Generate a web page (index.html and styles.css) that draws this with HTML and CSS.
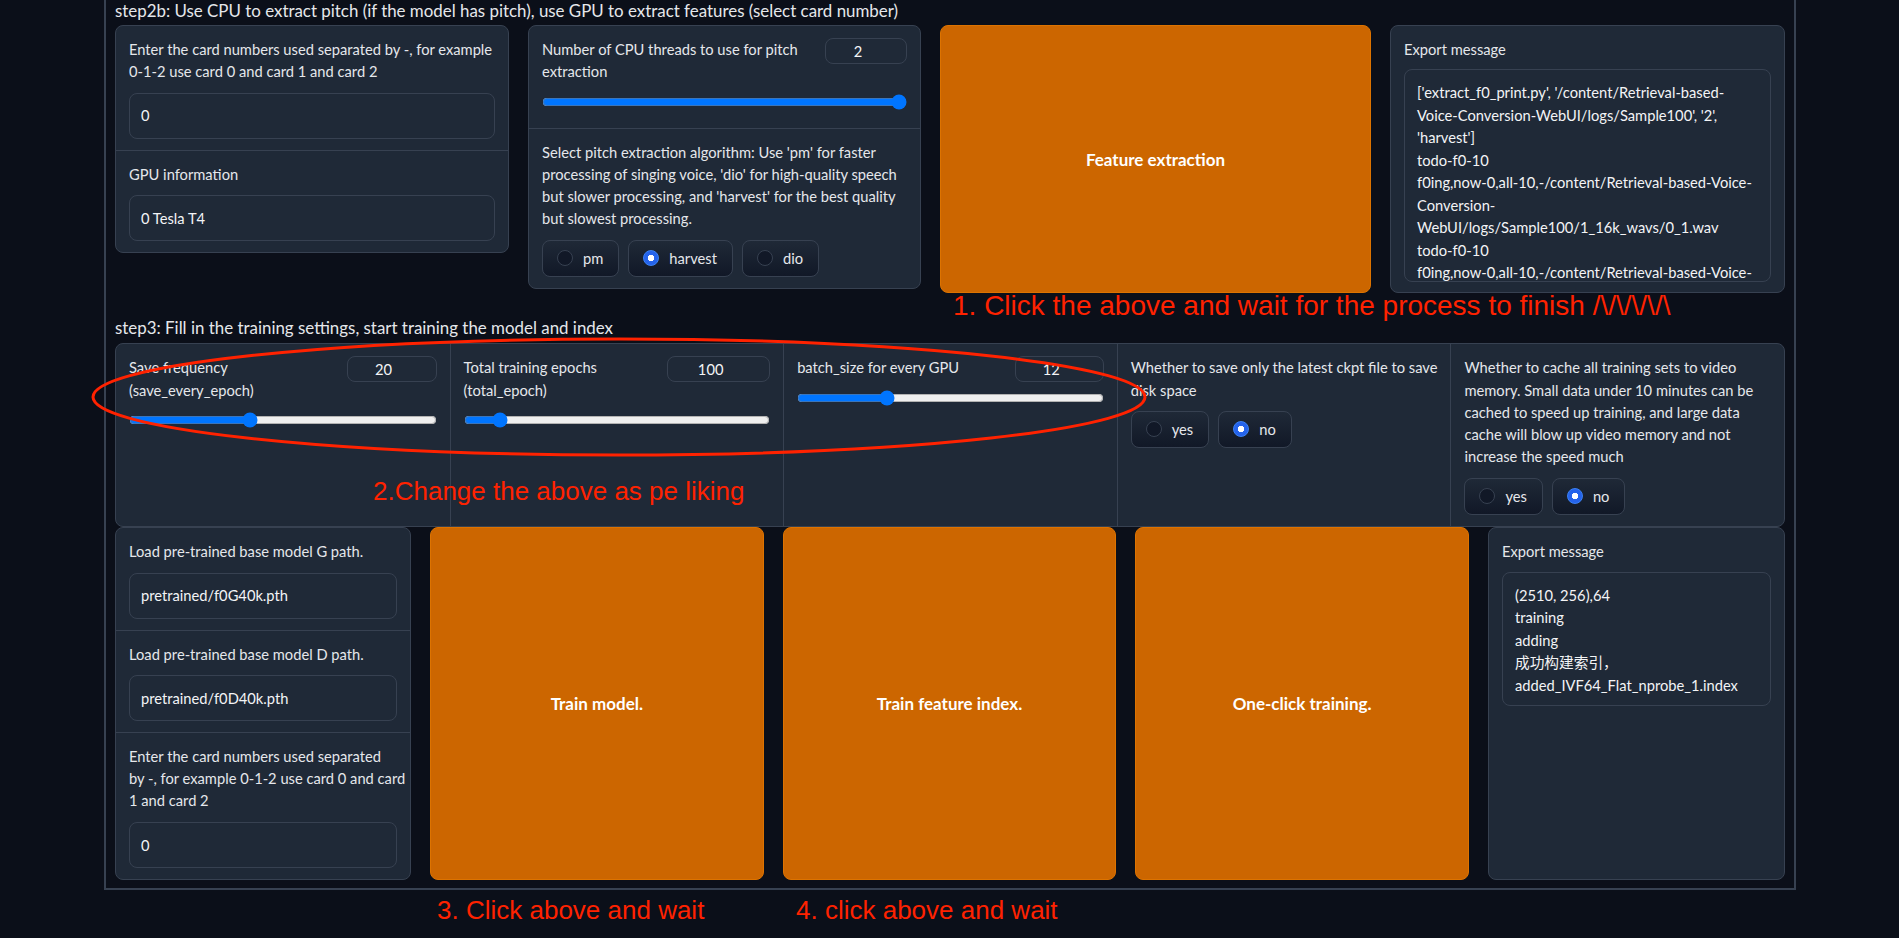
FILE: index.html
```html
<!DOCTYPE html>
<html lang="en">
<head>
<meta charset="utf-8">
<title>RVC training</title>
<link rel="stylesheet" href="styles.css">
</head>
<body>
<div class="page">
  <div class="frame">
    <div class="heading">step2b: Use CPU to extract pitch (if the model has pitch), use GPU to extract features (select card number)</div>

    <div class="row-top">
      <div class="card form">
        <div class="field">
          <div class="label">Enter the card numbers used separated by -, for example<br>0-1-2 use card 0 and card 1 and card 2</div>
          <div class="input">0</div>
        </div>
        <div class="field">
          <div class="label">GPU information</div>
          <div class="input">0 Tesla T4</div>
        </div>
      </div>

      <div class="card form">
        <div class="field field-slider">
          <div class="slider-head">
            <div class="label">Number of CPU threads to use for pitch<br>extraction</div>
            <div class="num num-82">2</div>
          </div>
          <input class="range" type="range" min="0" max="2" value="2">
        </div>
        <div class="field">
          <div class="label">Select pitch extraction algorithm: Use 'pm' for faster<br>processing of singing voice, 'dio' for high-quality speech<br>but slower processing, and 'harvest' for the best quality<br>but slowest processing.</div>
          <div class="radios">
            <div class="pill"><span class="dot"></span>pm</div>
            <div class="pill"><span class="dot on"></span>harvest</div>
            <div class="pill"><span class="dot"></span>dio</div>
          </div>
        </div>
      </div>

      <button class="btn">Feature extraction</button>

      <div class="card export">
        <div class="label">Export message</div>
        <div class="textarea ta-top">
          <div>['extract_f0_print.py', '/content/Retrieval-based-</div>
          <div>Voice-Conversion-WebUI/logs/Sample100', '2',</div>
          <div>'harvest']</div>
          <div>todo-f0-10</div>
          <div>f0ing,now-0,all-10,-/content/Retrieval-based-Voice-</div>
          <div>Conversion-</div>
          <div>WebUI/logs/Sample100/1_16k_wavs/0_1.wav</div>
          <div>todo-f0-10</div>
          <div>f0ing,now-0,all-10,-/content/Retrieval-based-Voice-</div>
          <div>Conversion-</div>
        </div>
      </div>
    </div>

    <div class="heading heading-3">step3: Fill in the training settings, start training the model and index</div>

    <div class="card settings">
      <div class="col">
        <div class="slider-head">
          <div class="label">Save frequency<br>(save_every_epoch)</div>
          <div class="num num-90">20</div>
        </div>
        <input class="range" type="range" min="1" max="50" value="20">
      </div>
      <div class="col">
        <div class="slider-head">
          <div class="label">Total training epochs<br>(total_epoch)</div>
          <div class="num num-103">100</div>
        </div>
        <input class="range" type="range" min="1" max="1000" value="100">
      </div>
      <div class="col">
        <div class="slider-head">
          <div class="label">batch_size for every GPU</div>
          <div class="num num-89">12</div>
        </div>
        <input class="range" type="range" min="1" max="40" value="12">
      </div>
      <div class="col">
        <div class="label">Whether to save only the latest ckpt file to save<br>disk space</div>
        <div class="radios">
          <div class="pill"><span class="dot"></span>yes</div>
          <div class="pill"><span class="dot on"></span>no</div>
        </div>
      </div>
      <div class="col">
        <div class="label">Whether to cache all training sets to video<br>memory. Small data under 10 minutes can be<br>cached to speed up training, and large data<br>cache will blow up video memory and not<br>increase the speed much</div>
        <div class="radios">
          <div class="pill"><span class="dot"></span>yes</div>
          <div class="pill"><span class="dot on"></span>no</div>
        </div>
      </div>
    </div>

    <div class="row-bottom">
      <div class="card form">
        <div class="field">
          <div class="label">Load pre-trained base model G path.</div>
          <div class="input">pretrained/f0G40k.pth</div>
        </div>
        <div class="field">
          <div class="label">Load pre-trained base model D path.</div>
          <div class="input">pretrained/f0D40k.pth</div>
        </div>
        <div class="field">
          <div class="label">Enter the card numbers used separated<br>by -, for example 0-1-2 use card 0 and card<br>1 and card 2</div>
          <div class="input">0</div>
        </div>
      </div>
      <button class="btn">Train model.</button>
      <button class="btn">Train feature index.</button>
      <button class="btn">One-click training.</button>
      <div class="card export">
        <div class="label">Export message</div>
        <div class="textarea ta-bottom">
          <div>(2510, 256),64</div>
          <div>training</div>
          <div>adding</div>
          <div>成功构建索引，</div>
          <div>added_IVF64_Flat_nprobe_1.index</div>
        </div>
      </div>
    </div>
  </div>

  <svg class="ellipse" width="1090" height="150" viewBox="0 0 1090 150" aria-hidden="true">
    <ellipse cx="539" cy="72" rx="526" ry="58" fill="none" stroke="#ff2200" stroke-width="3"/>
  </svg>
  <div class="anno anno-1">1. Click the above and wait for the process to finish /\/\/\/\/\</div>
  <div class="anno anno-2">2.Change the above as pe liking</div>
  <div class="anno anno-3">3. Click above and wait</div>
  <div class="anno anno-4">4. click above and wait</div>
</div>
</body>
</html>
```

FILE: styles.css
```css
* { box-sizing: border-box; }

html, body {
  margin: 0;
  padding: 0;
}

body {
  background: #0b0f19;
  color: #e5e7eb;
  font-family: Lato, "Noto Sans", "Noto Sans CJK SC", sans-serif;
  font-size: 14.7px;
  line-height: 22.3px;
  overflow: hidden;
}

.page {
  position: relative;
  display: flow-root;
  width: 1899px;
  height: 938px;
}

.frame {
  width: 1692px;
  margin: -12px 0 0 104px;
  border: 2px solid #374151;
  padding: 10px 9px 9px;
}

.heading {
  font-size: 16.9px;
  line-height: 22px;
  color: #e5e7eb;
  margin-bottom: 3px;
  white-space: nowrap;
}

.heading-3 {
  margin-top: 24px;
  margin-bottom: 4px;
}

.row-top {
  display: grid;
  grid-template-columns: 394px 393px 1fr 395px;
  gap: 19px;
  align-items: start;
}

.row-bottom {
  display: grid;
  grid-template-columns: 296px 1fr 1fr 1fr 297px;
  gap: 19px;
  height: 352px;
  align-items: stretch;
}

.card {
  background: #1f2937;
  border: 1px solid #374151;
  border-radius: 8px;
}

.field {
  padding: 12px 13px 11px;
}

.field + .field {
  border-top: 1px solid #374151;
}

.field-slider {
  padding-bottom: 18px;
}

.label {
  white-space: nowrap;
  color: #e5e7eb;
}

.input {
  margin-top: 10px;
  height: 46px;
  border: 1px solid #374151;
  border-radius: 8px;
  padding: 0 11px;
  display: flex;
  align-items: center;
  color: #f3f4f6;
  white-space: nowrap;
}

.slider-head {
  display: flex;
  justify-content: space-between;
  align-items: flex-start;
}

.num {
  height: 26px;
  margin-bottom: -4px;
  border: 1px solid #374151;
  border-radius: 8px;
  padding-right: 16px;
  text-align: center;
  line-height: 24px;
  color: #f3f4f6;
  flex: none;
}

.num-82 { width: 82px; }
.num-89 { width: 89px; }
.num-90 { width: 90px; }
.num-103 { width: 103px; }

.range {
  display: block;
  width: 100%;
  height: 16px;
  margin: 11px 0 0;
  padding: 0;
  accent-color: #0075ff;
}

.radios {
  display: flex;
  gap: 9px;
  margin-top: 10px;
}

.pill {
  height: 37px;
  display: flex;
  align-items: center;
  gap: 10px;
  padding: 0 15px 0 14px;
  border: 1px solid #374151;
  border-radius: 8px;
  background: linear-gradient(to top, #111827, #1f2937);
  color: #e5e7eb;
}

.dot {
  width: 16px;
  height: 16px;
  border-radius: 50%;
  background: #111827;
  border: 1px solid #374151;
  flex: none;
}

.dot.on {
  background: radial-gradient(circle, #ffffff 0 3px, #2563eb 3.5px);
  border-color: #3b82f6;
}

.btn {
  align-self: stretch;
  background: #cc6600;
  border: 1px solid #dd7300;
  border-radius: 8px;
  color: #ffffff;
  font-family: Lato, "Noto Sans", sans-serif;
  font-size: 17px;
  font-weight: 700;
  padding: 0;
  cursor: pointer;
}

.export {
  padding: 12px 13px 10px;
}

.textarea {
  margin-top: 9px;
  border: 1px solid #374151;
  border-radius: 8px;
  padding: 11px 12px;
  line-height: 22.5px;
  overflow: hidden;
  color: #f3f4f6;
}

.textarea > div {
  white-space: pre;
}

.ta-top { height: 213px; }
.ta-bottom { height: 134px; }

.settings {
  display: grid;
  grid-template-columns: repeat(5, 1fr);
  height: 184px;
}

.col {
  padding: 12px 13px;
}

.col + .col {
  border-left: 1px solid #374151;
}

.ellipse {
  position: absolute;
  left: 80px;
  top: 325px;
  pointer-events: none;
}

.anno {
  position: absolute;
  font-family: "Liberation Sans", Arial, sans-serif;
  font-size: 26px;
  line-height: 1;
  color: #ff2200;
  white-space: nowrap;
}

.anno-1 { left: 953px; top: 292px; font-size: 28px; }
.anno-2 { left: 373px; top: 478px; }
.anno-3 { left: 437px; top: 897px; }
.anno-4 { left: 796px; top: 897px; }
```
